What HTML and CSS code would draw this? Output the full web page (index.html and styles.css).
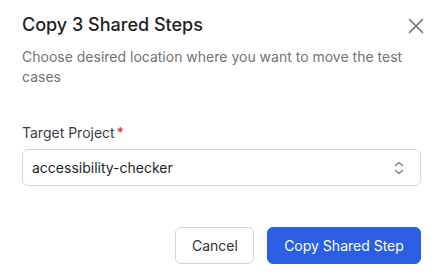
FILE: index.html
```html
<!DOCTYPE html>
<html>
<head>
<meta charset="utf-8">
<link rel="stylesheet" href="styles.css">
</head>
<body>
<div class="dialog">
  <div class="header">
    <h2 class="title">Copy 3 Shared Steps</h2>
    <button class="close" aria-label="Close">
      <svg width="16" height="16" viewBox="0 0 16 16"><path d="M1.5 1.5L14.5 14.5M14.5 1.5L1.5 14.5" stroke="#6b6f76" stroke-width="1.6" stroke-linecap="round"/></svg>
    </button>
  </div>
  <p class="desc">Choose desired location where you want to move the test cases</p>
  <div class="field">
    <label class="label">Target Project<span class="req">*</span></label>
    <div class="select">
      <span class="value">accessibility-checker</span>
      <svg class="chev" width="10" height="16" viewBox="0 0 10 16"><path d="M1.5 5.5L5 2.5L8.5 5.5M1.5 10.5L5 13.5L8.5 10.5" fill="none" stroke="#7a7f87" stroke-width="1.3" stroke-linecap="round" stroke-linejoin="round"/></svg>
    </div>
  </div>
  <div class="actions">
    <button class="btn btn-secondary">Cancel</button>
    <button class="btn btn-primary">Copy Shared Step</button>
  </div>
</div>
</body>
</html>
```

FILE: styles.css
```css
* { box-sizing: border-box; }
html, body { margin: 0; padding: 0; background: #fff; }
body { font-family: Inter, "Noto Sans", sans-serif; color: #1f2328; }
.dialog { width: 444px; height: 279px; padding: 13px 23px 0 22px; display: flex; flex-direction: column; }
.header { display: flex; justify-content: space-between; align-items: center; height: 24px; }
.title { margin: 0; font-size: 18px; font-weight: 500; line-height: 24px; color: #1d1f23; letter-spacing: 0; }
.close { border: 0; background: none; padding: 0; width: 16px; height: 16px; margin-right: -3px; margin-top: 2px; display: flex; }
.desc { margin: 10px 0 0; font-size: 14px; line-height: 20px; color: #6f737b; }
.field { margin-top: 36px; display: flex; flex-direction: column; }
.label { font-size: 14px; line-height: 20px; color: #3a3d42; font-weight: 400; }
.req { color: #d02a2a; margin-left: 2px; }
.select { margin-top: 6px; height: 37px; border: 1px solid #d4d6da; border-radius: 6px; display: flex; align-items: center; justify-content: space-between; padding: 0 16px 0 9px; }
.value { font-size: 14px; color: #22252a; }
.actions { margin-top: 41px; display: flex; justify-content: flex-end; gap: 13px; }
.btn { font-family: Inter, "Noto Sans", sans-serif; font-size: 14px; height: 37px; border-radius: 6px; padding: 0 16px; cursor: pointer; }
.btn-secondary { width: 79px; background: #fff; border: 1px solid #d4d6da; color: #2c2f34; }
.btn-primary { width: 154px; background: #2a5fe3; border: 1px solid #2a5fe3; color: #fff; }
```
